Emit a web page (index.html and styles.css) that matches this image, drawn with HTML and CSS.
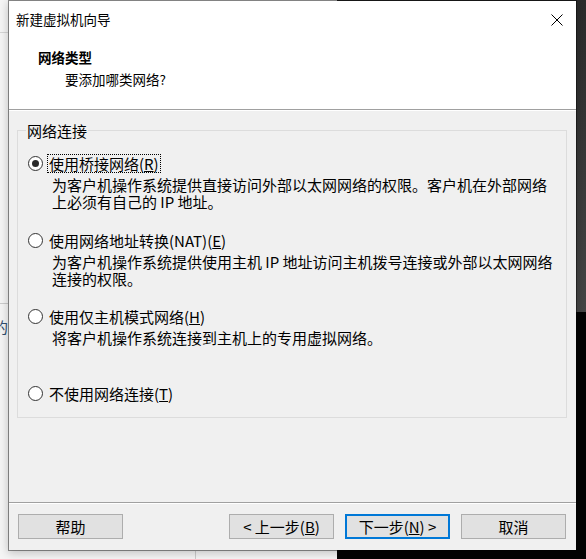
FILE: index.html
```html
<!DOCTYPE html>
<html lang="zh-CN">
<head>
<meta charset="utf-8">
<title>新建虚拟机向导</title>
<link rel="stylesheet" href="styles.css">
</head>
<body>
<div class="desktop">
  <span class="bg-text">的</span>
  <div class="dialog">
    <div class="top">
      <div class="titlebar">
        <span class="title">新建虚拟机向导</span>
        <svg class="close" viewBox="0 0 12 12" aria-hidden="true"><path d="M0.5 0.5 L11.5 11.5 M11.5 0.5 L0.5 11.5" stroke="#000" stroke-width="1" fill="none"/></svg>
      </div>
      <div class="head-title">网络类型</div>
      <div class="head-sub">要添加哪类网络?</div>
    </div>
    <div class="main">
      <fieldset class="group">
        <legend>网络连接</legend>
        <div class="option">
          <div class="opt-row"><span class="radio checked"></span><span class="label focus">使用桥接网络(<u>R</u>)</span></div>
          <div class="desc">为客户机操作系统提供直接访问外部以太网网络的权限。客户机在外部网络<br>上必须有自己的 IP 地址。</div>
        </div>
        <div class="option">
          <div class="opt-row"><span class="radio"></span><span class="label">使用网络地址转换(NAT)(<u>E</u>)</span></div>
          <div class="desc">为客户机操作系统提供使用主机 IP 地址访问主机拨号连接或外部以太网网络<br>连接的权限。</div>
        </div>
        <div class="option">
          <div class="opt-row"><span class="radio"></span><span class="label">使用仅主机模式网络(<u>H</u>)</span></div>
          <div class="desc">将客户机操作系统连接到主机上的专用虚拟网络。</div>
        </div>
        <div class="option last">
          <div class="opt-row"><span class="radio"></span><span class="label">不使用网络连接(<u>T</u>)</span></div>
        </div>
      </fieldset>
    </div>
    <div class="footer">
      <button class="btn help">帮助</button>
      <button class="btn">&lt; 上一步(<u>B</u>)</button>
      <button class="btn default">下一步(<u>N</u>) &gt;</button>
      <button class="btn">取消</button>
    </div>
  </div>
</div>
</body>
</html>
```
FILE: styles.css
```css
html, body {
  margin: 0;
  padding: 0;
}
body {
  font-family: "Noto Sans CJK SC", "Noto Sans", sans-serif;
  color: #000;
  background: #f5f5f5;
}
.desktop {
  position: relative;
  width: 586px;
  height: 559px;
  overflow: hidden;
  background:
    linear-gradient(#d6d6d6, #d6d6d6) 0 32px / 8px 1px no-repeat,
    linear-gradient(#cccccc, #cccccc) 0 303px / 8px 1px no-repeat,
    linear-gradient(#cccccc, #cccccc) 195px 551px / 1px 8px no-repeat,
    linear-gradient(#2b2b2b, #454545) 337px 0 / 249px 312px no-repeat,
    linear-gradient(to right, #f5f5f5 337px, #030303 337px);
}
.bg-text {
  position: absolute;
  left: -7px;
  top: 318px;
  font-size: 15px;
  line-height: 17px;
  color: #2f4f6f;
}
.dialog {
  position: relative;
  z-index: 1;
  margin-left: 8px;
  width: 569px;
  height: 551px;
  box-sizing: border-box;
  border: 1px solid rgba(0, 0, 0, 0.42);
  background: #f0f0f0;
  background-clip: padding-box;
  display: flex;
  flex-direction: column;
  box-shadow: 0 2px 9px rgba(0, 0, 0, 0.22);
}
.top {
  flex: none;
  height: 108px;
  background: #fff;
  border-bottom: 1px solid #a0a0a0;
}
.titlebar {
  height: 37px;
  display: flex;
  align-items: center;
  justify-content: space-between;
  padding: 0 13px 0 7px;
}
.title {
  font-size: 13.5px;
  line-height: 37px;
}
.close {
  width: 12px;
  height: 12px;
  display: block;
}
.head-title {
  margin-top: 8px;
  padding-left: 29px;
  font-size: 13.5px;
  line-height: 22px;
  font-weight: bold;
}
.head-sub {
  padding-left: 56px;
  font-size: 13.5px;
  line-height: 22px;
}
.main {
  flex: 1;
  border-top: 1px solid #fff;
  padding: 11px 9px 0 8px;
}
.group {
  margin: 0;
  padding: 15px 0 14px;
  border: 1px solid #dcdcdc;
  min-width: 0;
}
.group legend {
  margin-left: 8px;
  padding: 0 1px;
  font-size: 15px;
  line-height: 17px;
}
.option {
  height: 76.5px;
}
.option.last {
  height: auto;
}
.opt-row {
  display: flex;
  align-items: center;
  height: 19px;
  padding-left: 10px;
}
.radio {
  flex: none;
  width: 15px;
  height: 15px;
  box-sizing: border-box;
  border: 1px solid #333;
  border-radius: 50%;
  background: #fff;
  display: flex;
  align-items: center;
  justify-content: center;
}
.radio.checked::after {
  content: "";
  width: 7px;
  height: 7px;
  border-radius: 50%;
  background: #2a2a2a;
}
.label {
  margin-left: 4px;
  padding: 0 1px;
  border: 1px dotted transparent;
  font-size: 15px;
  line-height: 17px;
  white-space: nowrap;
}
.label.focus {
  border-color: #000;
}
.desc {
  margin-left: 34px;
  margin-top: 3px;
  font-size: 15px;
  line-height: 17px;
  white-space: nowrap;
}
.footer {
  flex: none;
  display: flex;
  gap: 11px;
  border-top: 1px solid #a0a0a0;
  box-shadow: inset 0 1px 0 #fff;
  padding: 11px 10px 11px 9px;
}
.btn {
  width: 105px;
  height: 25px;
  box-sizing: border-box;
  border: 1px solid #adadad;
  background: #e1e1e1;
  color: #000;
  padding: 0;
  font-family: "Noto Sans CJK SC", "Noto Sans", sans-serif;
  font-size: 15px;
  line-height: 21px;
}
.btn.help {
  margin-right: auto;
}
.btn.default {
  border: 2px solid #0078d7;
}
```
